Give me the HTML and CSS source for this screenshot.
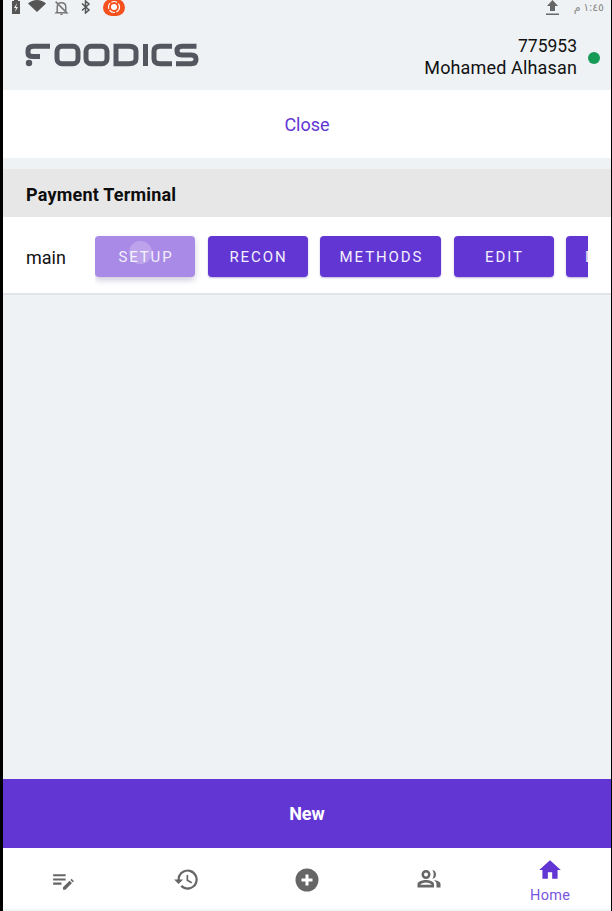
FILE: index.html
```html
<!DOCTYPE html>
<html lang="en">
<head>
<meta charset="utf-8">
<title>Payment Terminal</title>
<link rel="stylesheet" href="styles.css">
</head>
<body>
<div class="app">
  <div class="status">
    <div class="status-left">
      <svg class="s-batt" width="10" height="14" viewBox="0 0 10 14"><path fill="#555" d="M3 0h4v1h2v13H1V1h2z"/><path fill="#eef2f5" d="M6 3 3 8h2l-1 4 3-5H5z"/></svg>
      <svg class="s-wifi" width="18" height="12" viewBox="0 0 18 12"><path fill="#555" d="M0 3.500C2.500 1.200 5.500 0 9 0s6.500 1.200 9 3.500L9 12z"/></svg>
      <svg class="s-bell" width="15" height="15" viewBox="0 0 14 14"><path fill="none" stroke="#777" stroke-width="1.400" d="M3 11V6.500C3 4 4.500 2.500 7 2.500s4 1.500 4 4V11l1 1H2zM1.500 1.500l11 11M6 13.500h2"/></svg>
      <svg class="s-bt" width="10" height="14" viewBox="0 0 10 14"><path fill="none" stroke="#555" stroke-width="1.500" d="M1 3.500 8 10l-3.500 3V1L8 4 1 10.500"/></svg>
      <svg class="s-rec" width="22" height="17" viewBox="0 0 22 17"><rect width="22" height="17" rx="8.500" fill="#f4511e"/><circle cx="11" cy="8" r="5.500" fill="none" stroke="#fff" stroke-width="1.200" stroke-dasharray="6 1.500"/><circle cx="11" cy="8" r="3" fill="#fff"/></svg>
    </div>
    <div class="status-right">
      <svg width="13" height="16" viewBox="0 0 13 16"><path fill="#666" d="M6.500 0 12 6H9v5H4V6H1zM0 13.500h13V15H0z"/></svg>
      <span class="clock" dir="rtl">١:٤٥ م</span>
    </div>
  </div>

  <header class="top">
    <svg class="logo" width="174" height="26" viewBox="0 0 174 26" aria-label="Foodics">
      <g fill="none" stroke="#54565f" stroke-width="5">
        <path d="M25 3.200H8.500Q3 3.200 3 8V10Q3 13.500 8 13.500H15"/>
        <rect x="32" y="3.200" width="21" height="17.600" rx="5"/>
        <rect x="61" y="3.200" width="21" height="17.600" rx="5"/>
        <path d="M91 3.200H104Q111 3.200 111 8.200V15.800Q111 20.800 104 20.800H91Z"/>
        <path d="M120.500 1V23"/>
        <path d="M147 3.200H135Q129 3.200 129 8.200V15.800Q129 20.800 135 20.800H147"/>
        <path d="M171.500 3.200H157Q152 3.200 152 7.500V8Q152 12 157 12H166.500Q171 12 171 16V16.500Q171 20.800 166 20.800H151"/>
      </g>
      <circle cx="4" cy="20" r="3.200" fill="#54565f"/>
    </svg>
    <div class="user">
      <div class="user-text">
        <div class="user-id">775953</div>
        <div class="user-name">Mohamed Alhasan</div>
      </div>
      <span class="dot"></span>
    </div>
  </header>

  <div class="close">Close</div>

  <section class="terminal">
    <h2 class="terminal-title">Payment Terminal</h2>
    <div class="terminal-row">
      <span class="terminal-name">main</span>
      <div class="actions">
        <button class="btn btn-pressed">SETUP<span class="ripple"></span></button>
        <button class="btn">RECON</button>
        <button class="btn btn-wide">METHODS</button>
        <button class="btn">EDIT</button>
        <button class="btn">DELETE</button>
      </div>
    </div>
  </section>

  <div class="spacer"></div>

  <div class="new">New</div>

  <nav class="nav">
    <div class="nav-item nav-edit">
      <svg width="25" height="25" viewBox="0 0 24 24"><path fill="#666" d="M3 6h12v2H3zM3 10h12v2H3zM3 14h8v2H3z"/><path fill="#666" d="M12.500 20.800v-2.300l6.300-6.300 2.300 2.300-6.300 6.300zM19.600 11.400l1.100-1.100 2.300 2.300-1.100 1.100z"/></svg>
    </div>
    <div class="nav-item nav-history">
      <svg width="27" height="27" viewBox="0 0 24 24"><path fill="#666" d="M13 3a9 9 0 0 0-9 9H1l3.890 3.890.07.14L9 12H6a7 7 0 1 1 2.050 4.950l-1.420 1.420A9 9 0 1 0 13 3zm-1 5v5l4.280 2.540.72-1.210-3.500-2.080V8z"/></svg>
    </div>
    <div class="nav-item">
      <svg width="24" height="24" viewBox="0 0 24 24"><circle cx="12" cy="12" r="11.500" fill="#666"/><path fill="#fff" d="M10.500 6.500h3v4h4v3h-4v4h-3v-4h-4v-3h4z"/></svg>
    </div>
    <div class="nav-item nav-people">
      <svg width="24" height="24" viewBox="0 0 24 24"><path fill="#666" fill-rule="evenodd" d="M9 3a4.500 4.500 0 1 1 0 9 4.500 4.500 0 0 1 0-9zm0 2.500a2 2 0 1 0 0 4 2 2 0 0 0 0-4zM9 13c2.700 0 8 1.300 8 4v3.500H0.500V17c0-2.700 5.800-4 8.500-4zm0 2.500c-2.600 0-5.200 1-5.800 2.300h11.600c-.6-1.300-3.200-2.300-5.800-2.300z"/><path fill="#666" d="M15.400 3.100a4.500 4.500 0 0 1 0 8.800c1.800-2.500 1.800-6.300 0-8.800zM16.700 13.100c3.200.4 6.800 1.700 6.800 3.900v3.500h-4V17c0-1.600-1.300-2.900-2.800-3.900z"/></svg>
    </div>
    <div class="nav-item nav-active">
      <svg width="26" height="26" viewBox="0 0 24 24"><path fill="#6136d3" d="M10 20v-6h4v6h5v-8h3L12 3 2 12h3v8z"/></svg>
      <span class="nav-label">Home</span>
    </div>
  </nav>
  <div class="foot"></div>
</div>
</body>
</html>
```
FILE: styles.css
```css
* { box-sizing: border-box; }
html, body { margin: 0; height: 100%; background: #000; }
body { font-family: Roboto, "Liberation Sans", sans-serif; overflow: hidden; }
.app {
  margin: 0 1px 0 3px;
  height: 911px;
  background: #eef2f5;
  display: flex;
  flex-direction: column;
}
.status { height: 20px; flex: none; display: flex; justify-content: space-between; padding: 0 7px 0 8px; }
.status-left { display: flex; align-items: flex-start; }
.s-wifi { margin-left: 7px; }
.s-bell { margin: 0 0 0 8px; }
.s-bt { margin-left: 12px; }
.s-rec { margin: -1px 0 0 12px; }
.status-right { display: flex; align-items: flex-start; gap: 15px; }
.clock { font-size: 11px; color: #888; font-family: "Noto Sans", "DejaVu Sans", sans-serif; line-height: 14px; letter-spacing: .5px; }
.top { height: 70px; flex: none; display: flex; justify-content: space-between; align-items: flex-start; padding: 0 11px 0 22px; }
.logo { margin-top: 23px; }
.user { display: flex; align-items: center; margin-top: 16px; gap: 11px; }
.user-text { text-align: right; color: #111; }
.user-id { font-size: 17.500px; line-height: 21px; }
.user-name { font-size: 18px; line-height: 22px; letter-spacing: .15px; }
.dot { width: 12px; height: 12px; border-radius: 50%; background: #159a57; }
.close { height: 68px; flex: none; background: #fff; color: #6136d3; font-size: 18px; display: flex; align-items: center; justify-content: center; }
.terminal { margin-top: 11px; flex: none; }
.terminal-title { margin: 0; height: 48px; background: #e7e7e7; padding-left: 23px; font-size: 18px; font-weight: 700; line-height: 51px; color: #0d0d0d; letter-spacing: .2px; }
.terminal-row { height: 78px; background: #fff; border-bottom: 2px solid #e2e4e7; display: flex; align-items: flex-start; padding-left: 23px; }
.terminal-name { font-size: 18px; line-height: 81px; width: 69px; flex: none; color: #111; }
.actions { display: flex; gap: 12.500px; width: 493px; overflow: hidden; padding: 19px 0 10px; flex: none; }
.btn {
  flex: none;
  width: 100px;
  height: 41px;
  padding: 0 0 0 2px;
  border: 0;
  border-radius: 4px;
  background: #6136d3;
  color: #f3effc;
  font: 400 15px/42px Roboto, sans-serif;
  letter-spacing: 1.900px;
  position: relative;
  box-shadow: 0 1px 2px rgba(70, 40, 160, .35);
}
.btn-wide { width: 121px; }
.btn-pressed { background: #a98ae6; box-shadow: 0 3px 6px rgba(60, 40, 120, .25); }
.ripple { position: absolute; left: 34px; top: 5px; width: 23px; height: 23px; border-radius: 50%; background: rgba(255, 255, 255, .22); }
.spacer { flex: 1; }
.new { height: 69px; flex: none; background: #6136d3; color: #fff; font-size: 18px; font-weight: 700; display: flex; align-items: center; justify-content: center; }
.nav { height: 61px; flex: none; background: #fff; display: grid; grid-template-columns: repeat(5, 1fr); }
.nav-item { display: flex; flex-direction: column; align-items: center; padding-top: 20px; }
.nav-edit { padding-right: 2px; }
.nav-history { padding-top: 18px; padding-left: 2px; }
.nav-people { padding-top: 19px; padding-left: 1px; }
.nav-active { padding-top: 9px; }
.nav-label { font-size: 14.500px; line-height: 16px; color: #7a55dc; margin-top: 5px; letter-spacing: .3px; }
.foot { height: 2px; flex: none; background: #f4f5f6; }
```
